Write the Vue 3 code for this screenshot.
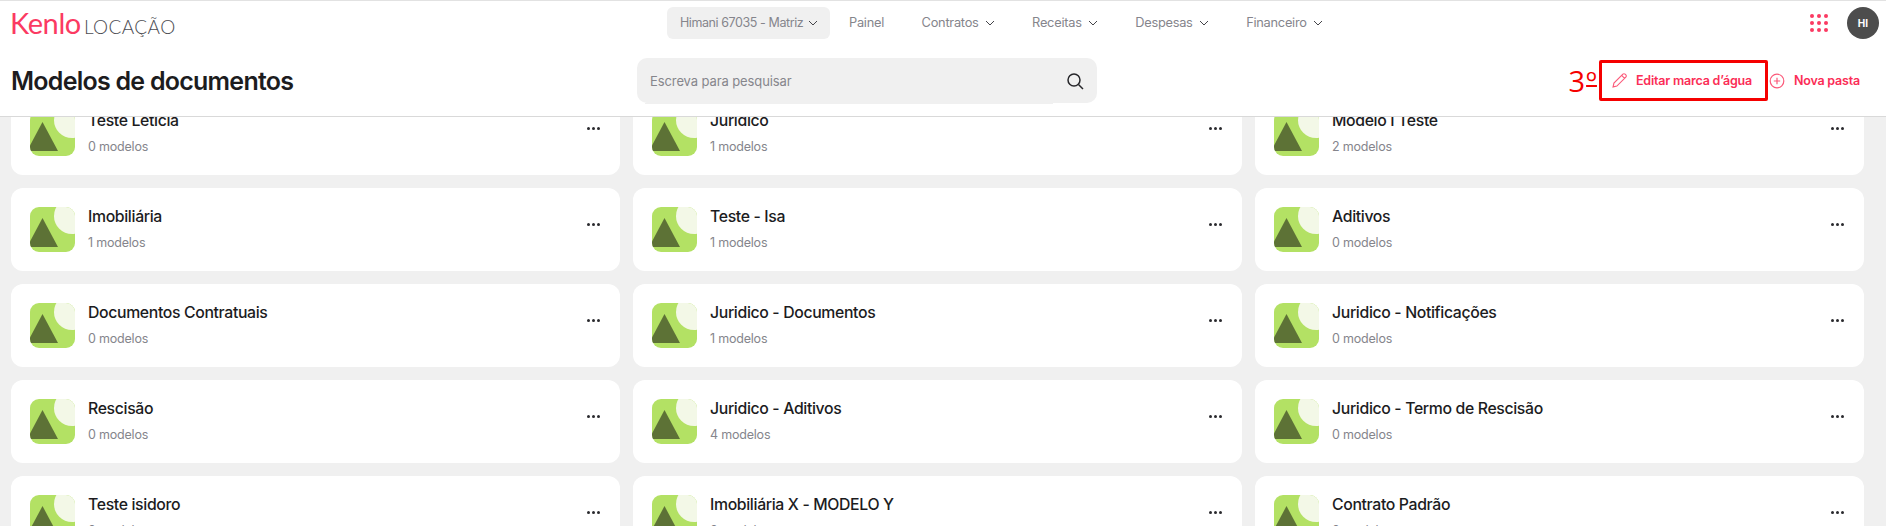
<script setup>
const nav = [
  { label: 'Painel', chevron: false },
  { label: 'Contratos', chevron: true },
  { label: 'Receitas', chevron: true },
  { label: 'Despesas', chevron: true },
  { label: 'Financeiro', chevron: true }
]
const folders = [
  ['Teste Letícia', 0], ['Juridico', 1], ['Modelo I Teste', 2],
  ['Imobiliária', 1], ['Teste - Isa', 1], ['Aditivos', 0],
  ['Documentos Contratuais', 0], ['Juridico - Documentos', 1], ['Juridico - Notificações', 0],
  ['Rescisão', 0], ['Juridico - Aditivos', 4], ['Juridico - Termo de Rescisão', 0],
  ['Teste isidoro', 0], ['Imobiliária X - MODELO Y', 0], ['Contrato Padrão', 0]
]
</script>

<template>
  <div class="page">
    <header class="header">
      <div class="topbar">
        <div class="logo"><span class="kenlo">Kenlo</span><span class="product">LOCAÇÃO</span></div>
        <nav class="nav">
          <div class="chip">
            <span>Himani 67035 - Matriz</span>
            <svg class="chev" viewBox="0 0 10 6"><path d="M1 1l4 4 4-4" /></svg>
          </div>
          <div v-for="n in nav" :key="n.label" class="nav-item">
            <span>{{ n.label }}</span>
            <svg v-if="n.chevron" class="chev" viewBox="0 0 10 6"><path d="M1 1l4 4 4-4" /></svg>
          </div>
        </nav>
        <div class="user">
          <div class="apps"><i v-for="d in 9" :key="d"></i></div>
          <div class="avatar">HI</div>
        </div>
      </div>
      <div class="titlebar">
        <h1>Modelos de documentos</h1>
        <div class="search">
          <span>Escreva para pesquisar</span>
          <svg viewBox="0 0 18 18" class="lens"><circle cx="8" cy="8" r="6" /><path d="M12.500 12.500L17 17" /></svg>
        </div>
        <div class="actions">
          <span class="step">3<span class="ord">º</span></span>
          <div class="mark">
            <button class="action">
              <svg viewBox="0 0 18 18" class="ico pencil"><path d="M2.200 15.800l.9-4L12.600 2.300a1.600 1.600 0 0 1 2.300 0l.8.8a1.600 1.600 0 0 1 0 2.300l-9.500 9.500z M11.300 3.600l3.100 3.100" /></svg>
              <span>Editar marca d’água</span>
            </button>
          </div>
          <button class="action new">
            <svg viewBox="0 0 16 16" class="ico plus"><circle cx="8" cy="8" r="6.800" /><path d="M8 4.800v6.400M4.800 8h6.400" /></svg>
            <span>Nova pasta</span>
          </button>
        </div>
      </div>
    </header>
    <main class="list">
      <article v-for="f in folders" :key="f[0]" class="card">
        <svg class="thumb" viewBox="0 0 45 45">
          <rect width="45" height="45" fill="#b3e164" />
          <circle cx="42" cy="9" r="18" fill="#f3f8e7" />
          <polygon points="12.500,11 28,40 -3,40" fill="#5d7236" />
        </svg>
        <div class="info">
          <div class="name">{{ f[0] }}</div>
          <div class="count">{{ f[1] }} modelos</div>
        </div>
        <div class="more"><i></i><i></i><i></i></div>
      </article>
    </main>
  </div>
</template>

<style>
html, body { margin: 0; background: #f0f0f0; overflow: hidden; }
</style>

<style scoped>
.page {
  width: 1886px;
  height: 526px;
  overflow: hidden;
  background: #f0f0f0;
  font-family: Inter, "Noto Sans", sans-serif;
}
.header {
  position: relative;
  z-index: 2;
  height: 115px;
  box-sizing: content-box;
  background: #fff;
  border-top: 1px solid #e2e2e2;
  border-bottom: 1px solid #d9d9d9;
}
.topbar {
  height: 43px;
  display: flex;
  align-items: center;
  padding: 0 7px 0 10px;
  box-sizing: border-box;
}
.logo {
  width: 657px;
  display: flex;
  align-items: baseline;
  flex: none;
}
.kenlo {
  font-family: Lato, sans-serif;
  font-size: 29px;
  font-weight: 400;
  letter-spacing: -0.4px;
  color: #fb3a62;
  line-height: 30px;
}
.product {
  font-family: Lato, sans-serif;
  font-size: 19px;
  font-weight: 300;
  color: #4d4d52;
  margin-left: 3px;
  letter-spacing: 0.4px;
}
.nav {
  display: flex;
  align-items: center;
  font-size: 12.800px;
  color: #85858c;
  letter-spacing: -0.25px;
}
.chip {
  width: 163px;
  height: 32px;
  box-sizing: border-box;
  padding-left: 13px;
  border-radius: 6px;
  background: #f0f0f0;
  display: flex;
  align-items: center;
  gap: 5px;
  margin-right: 19px;
  font-size: 12.500px;
  letter-spacing: -0.42px;
}
.nav-item {
  display: flex;
  align-items: center;
  gap: 6px;
  margin-right: 37.500px;
}
.chev {
  width: 10px;
  height: 6px;
  fill: none;
  stroke: #45454a;
  stroke-width: 1;
}
.user {
  margin-left: auto;
  display: flex;
  align-items: center;
  gap: 21px;
}
.apps {
  width: 16px;
  display: grid;
  grid-template-columns: repeat(3, 4px);
  gap: 3px;
}
.apps i {
  width: 4px;
  height: 4px;
  border-radius: 50%;
  background: #fb3a62;
}
.avatar {
  width: 32px;
  height: 32px;
  border-radius: 50%;
  background: #4d4d4d;
  color: #fff;
  font-size: 10px;
  font-weight: 700;
  display: flex;
  align-items: center;
  justify-content: center;
}
.titlebar {
  height: 72px;
  display: flex;
  align-items: center;
  padding: 1px 26px 0 11px;
  box-sizing: border-box;
}
h1 {
  margin: 0;
  width: 626px;
  flex: none;
  font-size: 25px;
  font-weight: 600;
  letter-spacing: -0.75px;
  color: #1c1c1e;
}
.search {
  position: relative;
  width: 460px;
  height: 45px;
  flex: none;
  box-sizing: border-box;
  background: #f0f0f0;
  border-radius: 10px;
  display: flex;
  align-items: center;
  justify-content: space-between;
  padding: 0 13px;
  font-size: 13px;
  color: #86868c;
  letter-spacing: -0.1px;
}
.search::after {
  content: '';
  position: absolute;
  left: 8px;
  bottom: -1px;
  width: 408px;
  height: 1px;
  background: #f0f0f0;
}
.lens {
  width: 18px;
  height: 18px;
  fill: none;
  stroke: #26262a;
  stroke-width: 1.500;
}
.actions {
  margin-left: auto;
  display: flex;
  align-items: center;
  color: #fb2d56;
}
.step {
  font-family: "Open Sans", sans-serif;
  font-size: 29px;
  color: #f50000;
  line-height: 1;
  margin-right: 2px;
}
.ord {
  margin-left: 1px;
  text-decoration: underline;
  text-decoration-thickness: 1.500px;
  text-decoration-skip-ink: none;
  text-underline-offset: -7px;
}
.mark {
  width: 169px;
  height: 41px;
  box-sizing: border-box;
  border: 3px solid #f50000;
  border-radius: 2px;
  display: flex;
  align-items: center;
  padding-left: 9px;
}
.action {
  display: flex;
  align-items: center;
  gap: 8px;
  padding: 0;
  border: 0;
  background: none;
  font: 600 12.500px Inter, sans-serif;
  letter-spacing: -0.2px;
  color: #fb2d56;
}
.new {
  margin-left: 1px;
  gap: 9px;
}
.ico {
  flex: none;
  fill: none;
  stroke: #fb5a7a;
  stroke-width: 1.200;
}
.pencil { width: 17px; height: 17px; }
.plus { width: 16px; height: 16px; }
.list {
  margin-top: -25px;
  padding: 0 22px 0 11px;
  display: grid;
  grid-template-columns: repeat(3, 609px);
  column-gap: 13px;
  row-gap: 13px;
}
.card {
  height: 83px;
  box-sizing: border-box;
  background: #fff;
  border-radius: 12px;
  padding: 19px 20px 19px 19px;
  display: flex;
  align-items: flex-start;
}
.thumb {
  width: 45px;
  height: 45px;
  flex: none;
  border-radius: 9px;
}
.info {
  margin: -1px 0 0 13px;
  flex: 1;
}
.name {
  font-size: 15.800px;
  font-weight: 500;
  line-height: 21px;
  letter-spacing: -0.35px;
  color: #1c1c1e;
}
.count {
  margin-top: 7px;
  font-size: 12.500px;
  line-height: 18px;
  letter-spacing: -0.2px;
  color: #85858c;
}
.more {
  display: flex;
  gap: 2px;
  margin-top: 16px;
}
.more i {
  width: 3px;
  height: 3px;
  border-radius: 50%;
  background: #2a2a2e;
}
</style>
